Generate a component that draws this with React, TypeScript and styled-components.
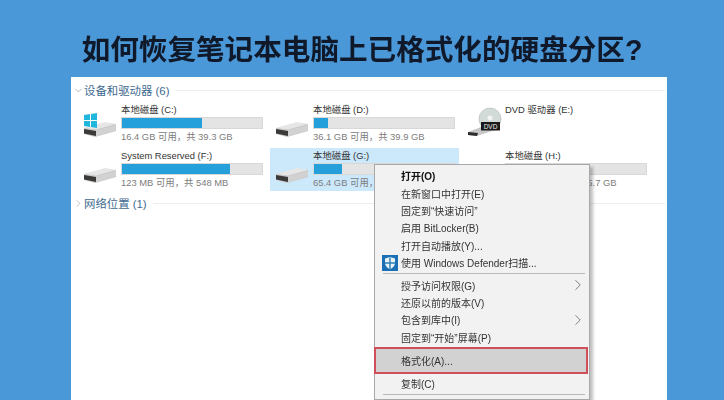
import React from "react";
import styled, { createGlobalStyle } from "styled-components";
import { ChevronDown, ChevronRight } from "lucide-react";

const GlobalStyle = createGlobalStyle`
  html, body {
    margin: 0;
    padding: 0;
    height: 400px;
    overflow: hidden;
    background: #4b98d9;
  }
`;

const FONT = `"Liberation Sans", "Noto Sans CJK SC", sans-serif`;

type Drive = {
  name: string;
  size?: string;
  used?: number;
  icon: "win" | "hdd" | "dvd";
  selected?: boolean;
};

// G's size line is cut off by the context menu in the picture
const drives: Drive[] = [
  { name: "本地磁盘 (C:)", size: "16.4 GB 可用，共 39.3 GB", used: 57, icon: "win" },
  { name: "本地磁盘 (D:)", size: "36.1 GB 可用，共 39.9 GB", used: 10, icon: "hdd" },
  { name: "DVD 驱动器 (E:)", icon: "dvd" },
  { name: "System Reserved (F:)", size: "123 MB 可用，共 548 MB", used: 77, icon: "hdd" },
  { name: "本地磁盘 (G:)", size: "65.4 GB 可用，", used: 20, icon: "hdd", selected: true },
  { name: "本地磁盘 (H:)", size: "55.7 GB 可用，共 65.7 GB", used: 15, icon: "hdd" },
];

type MenuEntry = { label?: string; bold?: boolean; arrow?: boolean; shield?: boolean; marked?: boolean; sep?: boolean };

const menu: MenuEntry[] = [
  { label: "打开(O)", bold: true },
  { label: "在新窗口中打开(E)" },
  { label: "固定到“快速访问”" },
  { label: "启用 BitLocker(B)" },
  { label: "打开自动播放(Y)..." },
  { label: "使用 Windows Defender扫描...", shield: true },
  { sep: true },
  { label: "授予访问权限(G)", arrow: true },
  { label: "还原以前的版本(V)" },
  { label: "包含到库中(I)", arrow: true },
  { label: "固定到“开始”屏幕(P)" },
  { label: "格式化(A)...", marked: true },
  { label: "复制(C)" },
  { sep: true },
];

function DriveIcon({ kind }: { kind: Drive["icon"] }) {
  if (kind === "dvd") {
    return (
      <svg width="36" height="36" viewBox="0 0 36 36">
        <circle cx="23" cy="13" r="11" fill="#d3dbd8" stroke="#a4aeaa" strokeWidth="0.5" />
        <circle cx="23" cy="12" r="2.5" fill="#f2f5f4" />
        <path d="M1 26 L14 21 L20 24 L28 24 L10 30 L1 29 Z" fill="#c8c8c8" />
        <path d="M1 26 L11 27 L10 30 L1 29 Z" fill="#2e2c2a" />
        <rect x="14" y="16" width="19" height="8.5" fill="#1a1a1a" />
        <DvdLabel x="23.5" y="22.6" textAnchor="middle">
          DVD
        </DvdLabel>
      </svg>
    );
  }
  return (
    <svg width="36" height="36" viewBox="0 0 36 36">
      <path d="M1 22 L22 17 L33 18 L33 25 L12 31 L1 28 Z" fill="#c9c9c9" />
      <path d="M1 22 L22 16 L33 18 L13 23.5 Z" fill="#e6e6e6" />
      <path d="M1 23 L13 25 L13 30 L1 27.5 Z" fill="#3c3a38" />
      <path d="M13 24.5 L33 19 L33 24 L13 30.5 Z" fill="#d2d2d2" />
      {kind === "win" && <path d="M1 9 L7 8 V14 H1 Z M8 8 L14 7 V14 H8 Z M1 15 H7 V21 L1 20 Z M8 15 H14 V22 L8 21 Z" fill="#22b6dc" />}
    </svg>
  );
}

function Shield() {
  return (
    <svg width="16" height="16" viewBox="0 0 16 16">
      <rect width="16" height="16" fill="#1c6fb5" />
      <path d="M8 2 L13 3.5 V8 C13 11 10.5 13 8 14.2 C5.5 13 3 11 3 8 V3.5 Z" fill="#e8f2f4" />
      <path d="M7.3 2.5 H8.7 V7.3 H13 V8.7 H8.7 V14 H7.3 V8.7 H3 V7.3 H7.3 Z" fill="#2a7fb8" />
    </svg>
  );
}

export default function App() {
  return (
    <Page>
      <GlobalStyle />
      <Title>如何恢复笔记本电脑上已格式化的硬盘分区?</Title>
      <Panel>
        <GroupHeader>
          <ChevronDown size={11} color="#8a9aa8" strokeWidth={1.5} />
          <GroupName>设备和驱动器 (6)</GroupName>
          <GroupRule />
        </GroupHeader>
        <DriveGrid>
          {drives.map((d) => (
            <Tile key={d.name} $selected={d.selected}>
              <IconSlot>
                <DriveIcon kind={d.icon} />
              </IconSlot>
              <TileText>
                <DriveName>{d.name}</DriveName>
                {d.used !== undefined && (
                  <Bar>
                    <BarFill style={{ width: `${d.used}%` }} />
                  </Bar>
                )}
                {d.size && <DriveSize>{d.size}</DriveSize>}
              </TileText>
            </Tile>
          ))}
        </DriveGrid>
        <GroupHeader>
          <ChevronRight size={11} color="#9aa5ae" strokeWidth={1.5} />
          <GroupName>网络位置 (1)</GroupName>
          <GroupRule />
        </GroupHeader>
        <ContextMenu>
          {menu.map((m, i) =>
            m.sep ? (
              <MenuSep key={i} />
            ) : (
              <MenuItem key={i} $bold={m.bold} $marked={m.marked}>
                <MenuIcon>{m.shield && <Shield />}</MenuIcon>
                <MenuLabel>{m.label}</MenuLabel>
                {m.arrow && <ChevronRight size={18} color="#666" strokeWidth={1.1} />}
              </MenuItem>
            )
          )}
        </ContextMenu>
      </Panel>
    </Page>
  );
}

const Page = styled.div`
  width: 724px;
  height: 400px;
  overflow: hidden;
  display: flex;
  flex-direction: column;
  align-items: center;
  background: #4b98d9;
  font-family: ${FONT};
`;

const Title = styled.h1`
  margin: 0;
  box-sizing: border-box;
  height: 77px;
  padding-top: 13px;
  line-height: 74px;
  flex: none;
  font-size: 28.6px;
  font-weight: 700;
  color: #10192a;
  white-space: nowrap;
  filter: blur(0.4px);
`;

const Panel = styled.div`
  position: relative;
  box-sizing: border-box;
  width: 596px;
  margin-left: 14px;
  flex: 1;
  background: #fff;
  padding: 4px 0 0 2px;
  filter: blur(0.4px);
`;

const GroupHeader = styled.div`
  display: flex;
  align-items: center;
  height: 18px;
`;

const GroupName = styled.span`
  font-size: 11.4px;
  color: #3f6a8f;
  white-space: nowrap;
`;

const GroupRule = styled.div`
  flex: 1;
  height: 1px;
  margin: 0 2px 0 6px;
  background: #e9eef2;
`;

const DriveGrid = styled.div`
  display: grid;
  grid-template-columns: repeat(3, 192px);
  grid-auto-rows: 46px;
  margin-top: 3px;
  padding-left: 5px;
`;

const Tile = styled.div<{ $selected?: boolean }>`
  display: flex;
  align-items: center;
  box-sizing: border-box;
  width: 189px;
  height: 43px;
  padding-left: 5px;
  gap: 1px;
  background: ${(p) => (p.$selected ? "#cce8fb" : "transparent")};
`;

const IconSlot = styled.div`
  width: 37px;
  flex: none;
  display: flex;
`;

const TileText = styled.div`
  flex: none;
  width: 142px;
  display: flex;
  flex-direction: column;
  align-self: flex-start;
  padding-top: 1px;
`;

const DriveName = styled.div`
  font-size: 9.4px;
  line-height: 14px;
  color: #333;
  white-space: nowrap;
`;

const DvdLabel = styled.text`
  font-size: 6.5px;
  fill: #f0f0f0;
  font-family: ${FONT};
`;

const Bar = styled.div`
  height: 12px;
  background: #e4e4e4;
  border: 1px solid #d8d8d8;
  box-sizing: border-box;
`;

const BarFill = styled.div`
  height: 100%;
  background: #26a0da;
`;

const DriveSize = styled.div`
  font-size: 9.4px;
  line-height: 15px;
  color: #7d7d7d;
  white-space: nowrap;
`;

const ContextMenu = styled.div`
  position: absolute;
  left: 303px;
  top: 87px;
  width: 216px;
  box-sizing: border-box;
  padding: 2px 2px;
  background: #f2f2f2;
  border: 1px solid #a8a8a8;
  box-shadow: 3px 3px 3px rgba(0, 0, 0, 0.25);
`;

const MenuItem = styled.div<{ $bold?: boolean; $marked?: boolean }>`
  display: flex;
  align-items: center;
  height: ${(p) => (p.$marked ? "27px" : "17.4px")};
  margin: ${(p) => (p.$marked ? "1px -1px 1px -3px" : "0")};
  padding: ${(p) => (p.$marked ? "0 0 0 3px" : "0")};
  box-sizing: border-box;
  font-size: 10px;
  font-weight: ${(p) => (p.$bold ? 700 : 400)};
  color: ${(p) => (p.$bold ? "#111" : "#333")};
  background: ${(p) => (p.$marked ? "#d2d2d2" : "transparent")};
  outline: ${(p) => (p.$marked ? "2px solid #cf4f5b" : "none")};
  outline-offset: -2px;
`;

const MenuIcon = styled.div`
  width: 19px;
  margin-left: 5px;
  flex: none;
  display: flex;
`;

const MenuLabel = styled.span`
  flex: 1;
  white-space: nowrap;
`;

const MenuSep = styled.div`
  height: 1px;
  margin: 2px 2px 2px 6px;
  background: #b8b8b8;
`;
